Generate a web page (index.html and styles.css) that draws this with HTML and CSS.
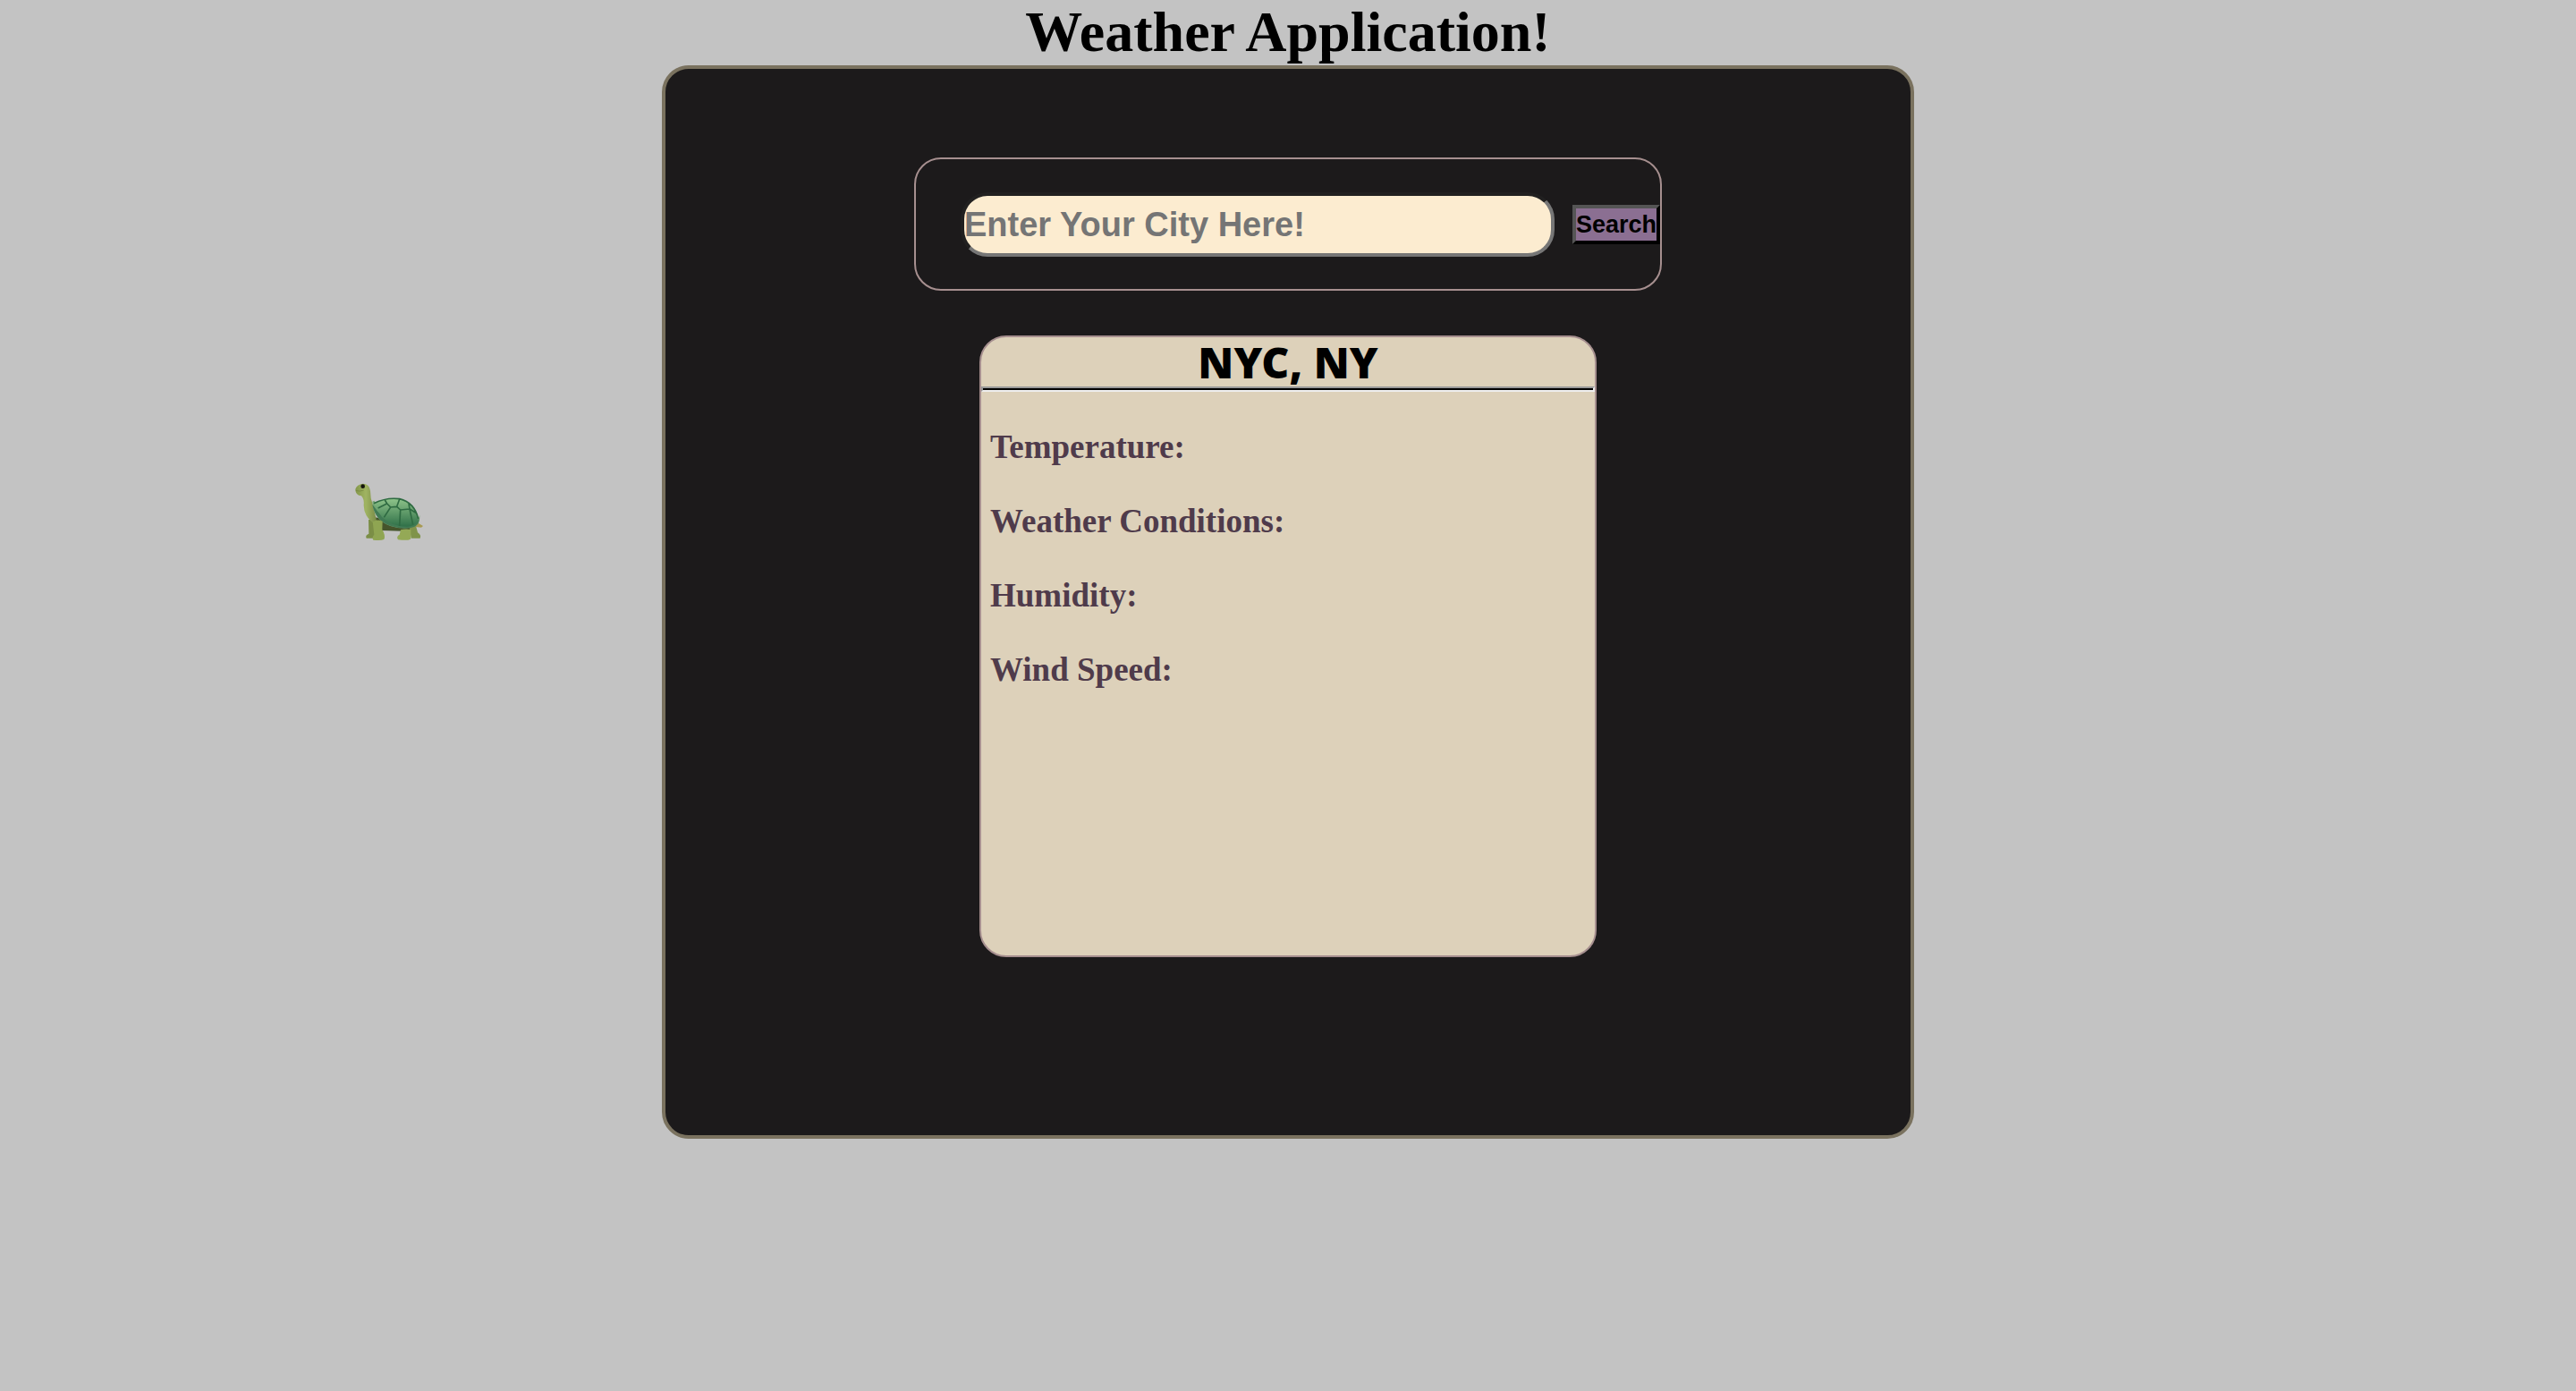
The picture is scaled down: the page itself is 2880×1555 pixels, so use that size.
FILE: index.html
```html
<!DOCTYPE html>
<html lang="en">
<head>
<meta charset="utf-8">
<title>Weather Application</title>
<link rel="stylesheet" href="styles.css">
</head>
<body>
<h1 class="title">Weather Application!</h1>
<div class="layout">
  <aside class="side">
    <svg class="turtle" viewBox="51 60 234 195" role="img" aria-label="Turtle">
      <defs>
        <linearGradient id="skin" x1="0" y1="0" x2="1" y2="0">
          <stop offset="0" stop-color="#84974a"/>
          <stop offset=".5" stop-color="#a0b462"/>
          <stop offset="1" stop-color="#7a8c48"/>
        </linearGradient>
        <linearGradient id="shell" x1="0" y1="0" x2="0" y2="1">
          <stop offset="0" stop-color="#8fc48a"/>
          <stop offset="1" stop-color="#2f7048"/>
        </linearGradient>
      </defs>
      <path fill="#a89a52" d="M262 192l20 12-6 5-20-2z"/>
      <path fill="#46552c" d="M120 175l133 23-16 24-97-3z"/>
      <path fill="#7b8e46" d="M99 183h28l-4 40-6 22H92q-5-10 8-15z"/>
      <path fill="#7f9349" d="M236 208l22-4 6 22q13 8 8 19h-30z"/>
      <path fill="url(#skin)" d="M55 80Q60 65 80 62q22 0 25 24 0 24 8 45l12 50-12 12Q84 170 83 135q2-22-8-32-20-2-20-23z"/>
      <path fill="none" stroke="#71823c" stroke-width="2" d="M56 85q13 5 27-1"/>
      <ellipse cx="80" cy="71" rx="7" ry="7" fill="#15150c"/>
      <path fill="#74a573" d="M112 122q2 60 60 82 50 15 85 0 15-8 14-36l-8 16q-50 20-95-10-35-24-50-55z"/>
      <path fill="#417a54" d="M112 132q10 55 62 72 48 14 80 2 16-8 15-28-10 18-30 22-48 6-85-22-25-20-42-46z"/>
      <path fill="url(#shell)" d="M116 127Q160 107 203 113q50 12 63 67-4 24-34 26-53 2-88-32-18-22-28-47z"/>
      <path fill="none" stroke="#2f6b42" stroke-width="5" stroke-linejoin="round" d="M117 128Q160 107 203 113q50 12 63 67M154 117l7 12-30 15M161 129l12 12 21-2 9-25M194 139l12 11 31-3-3-18M237 147l23 14M173 141l-22 34M206 150l-3 54M237 147l11 53"/>
      <path fill="#8fa552" d="M113 190q15-10 33-2l-1 28q12 20 6 33-10 5-36 2-6-9 3-18z"/>
      <path fill="#94a956" d="M207 217q15-4 34-1v23l-1 9q-10 6-42 2-7-11 5-17z"/>
    </svg>
  </aside>
  <main class="app">
    <form class="search">
      <input class="city" type="text" placeholder="Enter Your City Here!" aria-label="City">
      <button class="go" type="button">Search</button>
    </form>
    <section class="card">
      <h2 class="place">NYC, NY</h2>
      <hr class="rule">
      <div class="facts">
        <p>Temperature:</p>
        <p>Weather Conditions:</p>
        <p>Humidity:</p>
        <p>Wind Speed:</p>
      </div>
    </section>
  </main>
</div>
</body>
</html>
```
FILE: styles.css
```css
* {
  box-sizing: border-box;
  margin: 0;
}

body {
  background: #c3c3c3;
  font-family: "Liberation Serif", "Times New Roman", serif;
}

.title {
  font-size: 64px;
  line-height: 72px;
  padding-bottom: 1px;
  text-align: center;
}

.layout {
  display: grid;
  grid-template-columns: 1fr minmax(0, 1400px) 1fr;
}

.side {
  display: flex;
  justify-content: flex-end;
  padding: 467px 266px 0 0;
}

.turtle {
  width: 78px;
  height: 65px;
}

.app {
  grid-column: 2;
  display: flex;
  flex-direction: column;
  align-items: center;
  gap: 50px;
  min-height: 1200px;
  padding: 99px 20px;
  background: #1c1a1b;
  border: 4px solid #7a725f;
  border-radius: 30px;
}

.search {
  display: flex;
  align-items: center;
  gap: 20px;
  width: 100%;
  max-width: 836px;
  padding: 37px 0 36px 50px;
  border: 2px solid #a68f8f;
  border-radius: 30px;
}

.city {
  flex: 1;
  min-width: 0;
  height: 72px;
  padding: 0;
  background: #fcecd0;
  border: 4px solid;
  border-color: #212020 #767676 #767676 #212020;
  border-radius: 30px;
  font: bold 38px "Liberation Sans", Arial, sans-serif;
}

.city::placeholder {
  color: #757575;
  opacity: 1;
}

.go {
  height: 44px;
  padding: 0;
  background: #8b6f92;
  border: 4px solid;
  border-color: #555 #000 #000 #555;
  color: #000;
  font: bold 27px "Liberation Sans", Arial, sans-serif;
}

.card {
  width: 100%;
  max-width: 690px;
  min-height: 695px;
  background: #ddd1ba;
  border: 2px solid #a68f8f;
  border-radius: 30px;
}

.place {
  font: 900 48px/55px "Noto Sans", "Gill Sans", sans-serif;
  text-align: center;
}

.rule {
  height: 6px;
  background: #000;
  border: 2px solid;
  border-color: #999 #eee #eee #999;
}

.facts {
  display: flex;
  flex-direction: column;
  gap: 40px;
  padding: 40px 10px;
  color: #4f3b4b;
  font-size: 37px;
  font-weight: bold;
  line-height: 43px;
}
```
